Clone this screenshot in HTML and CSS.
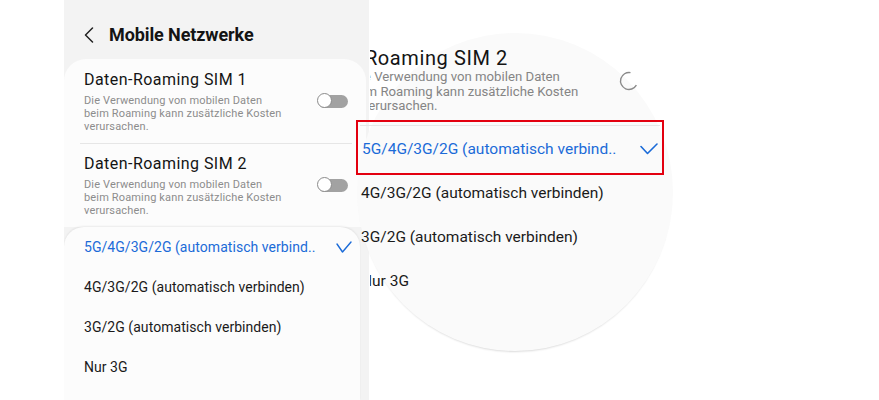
FILE: index.html
```html
<!DOCTYPE html>
<html lang="de">
<head>
<meta charset="utf-8">
<title>Mobile Netzwerke</title>
<link rel="stylesheet" href="styles.css">
</head>
<body>
<div class="page">
  <div class="phone">
    <header class="hdr">
      <svg class="back" width="10" height="16" viewBox="0 0 10 16"><path d="M8.5 1 L1.5 8 L8.5 15" fill="none" stroke="#222" stroke-width="1.5" stroke-linecap="round" stroke-linejoin="round"/></svg>
      <h1>Mobile Netzwerke</h1>
    </header>
    <div class="card">
      <div class="item">
        <div class="item-text">
          <div class="title">Daten-Roaming SIM 1</div>
          <div class="desc">Die Verwendung von mobilen Daten<br>beim Roaming kann zusätzliche Kosten<br>verursachen.</div>
        </div>
        <span class="toggle"></span>
      </div>
      <div class="sep"></div>
      <div class="item item2">
        <div class="item-text">
          <div class="title">Daten-Roaming SIM 2</div>
          <div class="desc">Die Verwendung von mobilen Daten<br>beim Roaming kann zusätzliche Kosten<br>verursachen.</div>
        </div>
        <span class="toggle"></span>
      </div>
    </div>
    <div class="popup">
      <div class="row sel">
        <span>5G/4G/3G/2G (automatisch verbind..</span>
        <svg class="check" width="16" height="12" viewBox="0 0 16 12"><path d="M1 3 L6.5 11 L15 1" fill="none" stroke="#1b6bd8" stroke-width="1.4" stroke-linecap="round" stroke-linejoin="round"/></svg>
      </div>
      <div class="row">4G/3G/2G (automatisch verbinden)</div>
      <div class="row">3G/2G (automatisch verbinden)</div>
      <div class="row">Nur 3G</div>
    </div>
  </div>

  <div class="lens">
    <div class="lens-top">
      <div class="lt-text">
        <div class="lt-title">Daten-Roaming SIM 2</div>
        <div class="lt-desc">
          <span class="l1">Die Verwendung von mobilen Daten</span>
          <span class="l2">beim Roaming kann zusätzliche Kosten</span>
          <span class="l3">verursachen.</span>
        </div>
      </div>
      <svg class="lt-arc" width="20" height="20" viewBox="0 0 20 20"><path d="M11.5 1.6 A8.5 8.5 0 1 0 17.4 14.2" fill="none" stroke="#8a8a8a" stroke-width="1.4"/></svg>
    </div>
    <div class="lens-sel">
      <div class="lens-sel-inner">
        <span>5G/4G/3G/2G (automatisch verbind..</span>
        <svg width="18" height="12" viewBox="0 0 18 12"><path d="M1 3.5 L7.5 10.5 L17 1" fill="none" stroke="#1b6bd8" stroke-width="1.6" stroke-linecap="round" stroke-linejoin="round"/></svg>
      </div>
    </div>
    <div class="lens-rows">
      <div class="lens-row">4G/3G/2G (automatisch verbinden)</div>
      <div class="lens-row">3G/2G (automatisch verbinden)</div>
      <div class="lens-row clip"><span class="cut"><span>Nur 3G</span></span></div>
    </div>
  </div>
</div>
</body>
</html>
```

FILE: styles.css
```css
html, body {
  margin: 0;
  padding: 0;
  background: #ffffff;
}

body {
  font-family: Roboto, "Noto Sans", "Liberation Sans", sans-serif;
}

.page {
  position: relative;
  width: 879px;
  height: 400px;
  overflow: hidden;
  background: #ffffff;
}

/* ---------- phone screen ---------- */
.phone {
  margin-left: 64px;
  width: 305px;
  height: 400px;
  background: #f3f3f3;
  overflow: hidden;
}

.hdr {
  display: flex;
  align-items: center;
  height: 49px;
  padding-top: 10px;
  padding-left: 20px;
}

.back {
  flex: none;
  margin-right: 15px;
}

.hdr h1 {
  margin: 0;
  font-size: 18px;
  font-weight: 700;
  color: #141414;
  letter-spacing: -0.1px;
}

.card {
  background: #fcfcfc;
  border-radius: 22px 22px 0 0;
  margin-right: 3px;
  height: 168px;
}

.item {
  display: flex;
  align-items: center;
  padding: 11px 18px 10.5px 20px;
}

.item2 {
  padding-top: 10px;
}

.item-text {
  flex: 1;
}

.title {
  font-size: 16px;
  line-height: 20px;
  letter-spacing: 0.45px;
  color: #141414;
  white-space: nowrap;
}

.desc {
  margin-top: 3.5px;
  font-size: 11px;
  line-height: 13px;
  letter-spacing: 0.15px;
  color: #8c8c8c;
  white-space: nowrap;
}

.toggle {
  position: relative;
  flex: none;
  width: 30px;
  height: 13px;
  border-radius: 7px;
  background: #a2a2a2;
}

.toggle::before {
  content: "";
  position: absolute;
  left: -1px;
  top: -1.5px;
  width: 13px;
  height: 13px;
  border: 1.5px solid #8c8c8c;
  border-radius: 50%;
  background: #ffffff;
}

.sep {
  height: 1px;
  background: #e6e6e6;
  margin: 0 14px 0 16px;
}

.popup {
  background: #fcfcfc;
  border-radius: 20px 20px 0 0;
  margin-right: 9px;
  height: 173px;
  box-shadow: 0 -1px 2px rgba(0, 0, 0, 0.07);
}

.row {
  height: 40px;
  display: flex;
  align-items: center;
  justify-content: space-between;
  padding: 0 8px 0 20px;
  font-size: 14px;
  letter-spacing: 0.05px;
  color: #1a1a1a;
  white-space: nowrap;
}

.row.sel {
  color: #1b6bd8;
}

.check {
  flex: none;
}

/* ---------- magnifier lens ---------- */
.lens {
  position: absolute;
  left: 357px;
  top: 33px;
  width: 316px;
  height: 318px;
  border-radius: 50%;
  background: #fafafa;
  box-shadow: 0 3px 2px -2px rgba(0, 0, 0, 0.14);
}

.lens-top {
  margin-left: 13px;
  width: 290px;
  overflow: hidden;
  padding-top: 13px;
  display: flex;
  align-items: center;
}

.lt-text {
  flex: none;
  width: 315.4px;
  margin-left: -66.4px;
}

.lt-title {
  font-size: 20px;
  line-height: 24px;
  letter-spacing: 0.6px;
  color: #141414;
  white-space: nowrap;
}

.lt-desc {
  font-size: 13.2px;
  line-height: 14.5px;
  color: #858585;
  white-space: nowrap;
}

.lt-desc span {
  display: block;
}

.lt-desc .l1 {
  margin-left: 48.4px;
}

.lt-desc .l2 {
  margin-left: 44.4px;
}

.lt-desc .l3 {
  margin-left: 58.4px;
}

.lt-arc {
  flex: none;
  margin-top: 2px;
}

.lens-sel {
  margin: 6.5px 0 0 -1px;
  width: 308px;
  height: 55px;
  box-sizing: border-box;
  border: 2px solid #e3000f;
}

.lens-sel-inner {
  margin: 3px 2px 0 2px;
  height: 46px;
  border-top: 1px solid #e6e6e6;
  display: flex;
  align-items: center;
  justify-content: space-between;
  padding: 0 2px;
  font-size: 15.5px;
  color: #1b6bd8;
  white-space: nowrap;
}

.lens-rows {
  margin-top: -4px;
}

.lens-row {
  height: 44px;
  display: flex;
  align-items: center;
  padding-left: 4px;
  font-size: 15.5px;
  color: #1a1a1a;
  white-space: nowrap;
}

.lens-row.clip {
  padding-left: 13px;
}

.cut {
  display: block;
  overflow: hidden;
}

.cut span {
  display: block;
  margin-left: -9px;
}
```
